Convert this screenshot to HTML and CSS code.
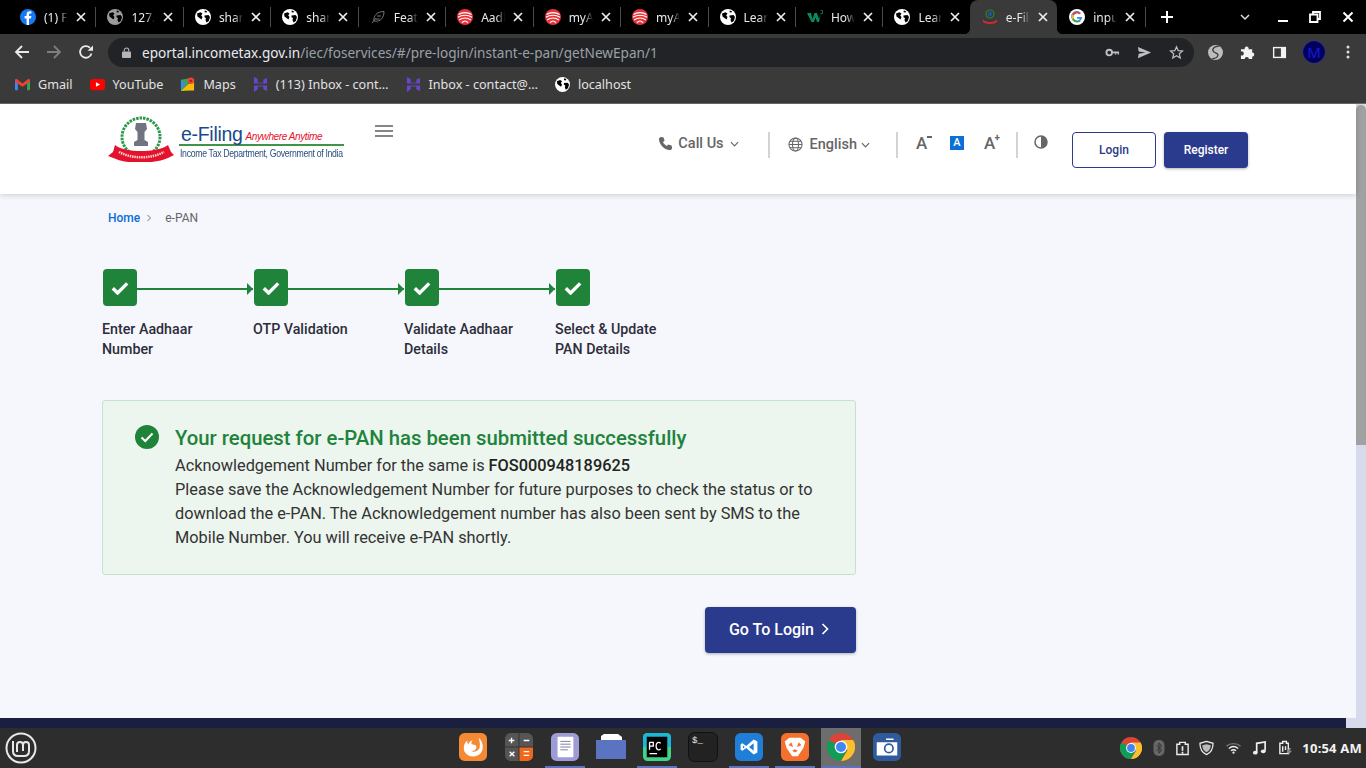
FILE: index.html
```html
<!DOCTYPE html>
<html lang="en">
<head>
<meta charset="utf-8">
<title>e-Filing</title>
<link rel="stylesheet" href="styles.css">
</head>
<body>
<svg class="defs" width="0" height="0">
  <defs>
    <symbol id="globe" viewBox="0 0 16 16">
      <circle cx="8" cy="8" r="8" fill="currentColor"/>
      <path d="M2 4.500 5.500 3.200 7.500 4.500 6.200 6.500 7.500 8 6.500 10.500 4.500 9 2.500 7.500ZM9.500 6.500 13.500 6 15 8 13.800 12 11.500 13.500 10.500 11 11 9 9.500 8.200ZM9.800 1.400 12 2.200 11.500 3.600 9.500 3.200Z" fill="#000"/>
    </symbol>
    <symbol id="aadhaar" viewBox="0 0 16 16">
      <circle cx="8" cy="8" r="8" fill="#e8333b"/>
      <path d="M1.500 5.500C5 3 11 3 14.500 5.500M1 8.200C5 5.600 11 5.600 15 8.200M2.200 11C5.500 8.400 10.500 8.400 13.800 11M5 14C6.500 11.400 9.500 11.400 11 14" fill="none" stroke="#fff" stroke-width="1.100"/>
    </symbol>
    <symbol id="close" viewBox="0 0 10 10">
      <path d="M1 1 9 9M9 1 1 9" stroke="currentColor" stroke-width="1.700" fill="none"/>
    </symbol>
    <symbol id="hostinger" viewBox="0 0 16 16">
      <path d="M1 0 5 2V6L11 6V3L15 1V7H1ZM1 9H15V15L11 13V10H5V13L1 16Z" fill="#6747c7"/>
    </symbol>
    <symbol id="chrome" viewBox="0 0 24 24">
      <circle cx="12" cy="12" r="12" fill="#db4437"/>
      <path d="M12 12 1.600 6A12 12 0 0 0 12 24L17.800 13.500Z" fill="#0f9d58"/>
      <path d="M12 6H22.400A12 12 0 0 1 12 24L17.500 15Z" fill="#fbc02d"/>
      <circle cx="12" cy="12" r="5.400" fill="#fff"/>
      <circle cx="12" cy="12" r="4.300" fill="#4285f4"/>
    </symbol>
    <symbol id="check" viewBox="0 0 18 14">
      <path d="M1.800 7.200 6.600 12 16.200 2.400" fill="none" stroke="currentColor" stroke-width="3.400"/>
    </symbol>
  </defs>
</svg>

<div class="chrome">
  <div class="tabstrip">
    <div class="tab"><svg class="fav" viewBox="0 0 16 16"><circle cx="8" cy="8" r="8" fill="#1877f2"/><path d="M9 16V9.400H11L11.400 7H9V5.600C9 4.800 9.400 4.400 10.200 4.400H11.400V2.400C10.800 2.300 10.200 2.200 9.700 2.200 7.800 2.200 6.600 3.400 6.600 5.300V7H4.600V9.400H6.600V16Z" fill="#fff"/></svg><span class="tab-title">(1) Facebook</span><svg class="tab-x"><use href="#close"/></svg></div>
    <div class="tab"><svg class="fav dim"><use href="#globe"/></svg><span class="tab-title">127.0.0.1</span><svg class="tab-x"><use href="#close"/></svg></div>
    <div class="tab"><svg class="fav"><use href="#globe"/></svg><span class="tab-title">share</span><svg class="tab-x"><use href="#close"/></svg></div>
    <div class="tab"><svg class="fav"><use href="#globe"/></svg><span class="tab-title">share</span><svg class="tab-x"><use href="#close"/></svg></div>
    <div class="tab"><svg class="fav" viewBox="0 0 16 16"><path d="M2 14 6 9M4 12C3 7 7 2.500 14 2.500 14 9 10 13 5 12ZM7 7H11M6 10H9.500" fill="none" stroke="#777" stroke-width="1"/></svg><span class="tab-title">Feature</span><svg class="tab-x"><use href="#close"/></svg></div>
    <div class="tab"><svg class="fav"><use href="#aadhaar"/></svg><span class="tab-title">Aadhaar</span><svg class="tab-x"><use href="#close"/></svg></div>
    <div class="tab"><svg class="fav"><use href="#aadhaar"/></svg><span class="tab-title">myAadhaar</span><svg class="tab-x"><use href="#close"/></svg></div>
    <div class="tab"><svg class="fav"><use href="#aadhaar"/></svg><span class="tab-title">myAadhaar</span><svg class="tab-x"><use href="#close"/></svg></div>
    <div class="tab"><svg class="fav"><use href="#globe"/></svg><span class="tab-title">Learn</span><svg class="tab-x"><use href="#close"/></svg></div>
    <div class="tab"><svg class="fav" viewBox="0 0 16 16"><path d="M0 4H4L5.500 10 7.500 4H10L12 10 14 4 12 13H10L8.500 8.500 7 13H4.500Z" fill="#0b8a5b"/><path d="M13.500 1.500H15.500V4.500H13.500" fill="none" stroke="#0b8a5b" stroke-width=".8"/></svg><span class="tab-title">How to</span><svg class="tab-x"><use href="#close"/></svg></div>
    <div class="tab tab-plain"><svg class="fav"><use href="#globe"/></svg><span class="tab-title">Learn</span><svg class="tab-x"><use href="#close"/></svg></div>
    <div class="tab tab-active"><svg class="fav" viewBox="0 0 16 16"><circle cx="8" cy="5" r="4" fill="none" stroke="#1f8a3b" stroke-width="1.200"/><circle cx="8" cy="5" r="2.200" fill="#2b4f8f"/><path d="M1 10.500C4 14 12 14 15 10.500V13C12 15.500 4 15.500 1 13Z" fill="#e02832"/></svg><span class="tab-title">e-Filing</span><svg class="tab-x"><use href="#close"/></svg></div>
    <div class="tab"><svg class="fav" viewBox="0 0 16 16"><circle cx="8" cy="8" r="8" fill="#fff"/><path d="M12.800 8.100H8.100V9.800H10.800C10.500 11 9.400 11.700 8.100 11.700A3.700 3.700 0 1 1 10.500 5.200L11.800 3.900A5.500 5.500 0 1 0 13 8.900Z" fill="#4285f4"/><path d="M3.200 5.300 4.700 6.400A3.700 3.700 0 0 1 10.500 5.200L11.800 3.900A5.500 5.500 0 0 0 3.200 5.300Z" fill="#ea4335"/><path d="M3.200 5.300A5.500 5.500 0 0 0 3.200 10.800L4.700 9.600A3.700 3.700 0 0 1 4.700 6.400Z" fill="#fbbc05"/><path d="M3.200 10.800A5.500 5.500 0 0 0 11.800 12L10.400 10.800A3.700 3.700 0 0 1 4.700 9.600Z" fill="#34a853"/></svg><span class="tab-title">input</span><svg class="tab-x"><use href="#close"/></svg></div>
    <svg class="newtab" viewBox="0 0 12 12"><path d="M6 0V12M0 6H12" stroke="#fff" stroke-width="2"/></svg>
    <div class="win-controls">
      <svg class="win-ic win-down" viewBox="0 0 12 12"><path d="M2 4 6 8 10 4" fill="none" stroke="#ddd" stroke-width="1.500"/></svg>
      <svg class="win-ic" viewBox="0 0 12 12"><path d="M1 10H11" stroke="#fff" stroke-width="2"/></svg>
      <svg class="win-ic win-restore" viewBox="0 0 12 12"><path d="M4 3V1H11V8H9M1 3.500H8.500V11H1Z" fill="none" stroke="#fff" stroke-width="1.800"/></svg>
      <svg class="win-ic" viewBox="0 0 12 12"><path d="M1.500 1.500 10.500 10.500M10.500 1.500 1.500 10.500" stroke="#fff" stroke-width="2"/></svg>
    </div>
  </div>
  <div class="toolbar">
    <svg class="nav-ic" viewBox="0 0 16 16"><path d="M15 8H2M8 2 2 8 8 14" fill="none" stroke="#e8eaed" stroke-width="1.800"/></svg>
    <svg class="nav-ic" viewBox="0 0 16 16"><path d="M1 8H14M8 2 14 8 8 14" fill="none" stroke="#7c7e82" stroke-width="1.800"/></svg>
    <svg class="nav-ic" viewBox="0 0 16 16"><path d="M13.500 9.500A5.800 5.800 0 1 1 12 3.800" fill="none" stroke="#e8eaed" stroke-width="1.800"/><path d="M9.500 6.800H15V1.500Z" fill="#e8eaed"/></svg>
    <div class="omnibox">
      <svg class="lock" viewBox="0 0 10 12"><path d="M2.500 5V3.500A2.500 2.500 0 0 1 7.500 3.500V5" fill="none" stroke="#b3b5b8" stroke-width="1.200"/><rect y="5" width="10" height="7" rx="1" fill="#b3b5b8"/></svg>
      <span class="url"><span class="url-host">eportal.incometax.gov.in</span>/iec/foservices/#/pre-login/instant-e-pan/getNewEpan/1</span>
      <svg class="omni-ic" viewBox="0 0 16 16"><circle cx="4.500" cy="8" r="3" fill="none" stroke="#bdbfc2" stroke-width="2"/><path d="M7.500 7H15V10H13.500V8.800H12V10H10.500V8.800H7.500Z" fill="#bdbfc2"/></svg>
      <svg class="omni-ic" viewBox="0 0 16 16"><path d="M1 2 15 8 1 14 1.800 9.200 9 8 1.800 6.800Z" fill="#bdbfc2"/></svg>
      <svg class="omni-ic" viewBox="0 0 16 16"><path d="M8 1.800 9.800 6 14.400 6.400 11 9.400 12 13.900 8 11.500 4 13.900 5 9.400 1.600 6.400 6.200 6Z" fill="none" stroke="#bdbfc2" stroke-width="1.300"/></svg>
    </div>
    <div class="ext">
      <svg class="ext-ic" viewBox="0 0 16 16"><circle cx="8" cy="8" r="8" fill="#bdbdbd"/><path d="M11.500 1.500C7.500 1 4.500 3.500 5.200 6 6 8.800 10.800 8 10.600 10.600 10.400 13 7.500 14.500 4.500 14.500" fill="none" stroke="#3a3a3a" stroke-width="1.500"/></svg>
      <svg class="ext-ic" viewBox="0 0 16 16"><path d="M1 4.500H5A2.200 2.200 0 1 1 9.200 4.500H13V8A2.200 2.200 0 1 1 13 12.500V15H9.500A2.200 2.200 0 1 0 5 15H1V11A2.200 2.200 0 1 0 1 7Z" fill="#f1f3f4"/></svg>
      <svg class="ext-ic" viewBox="0 0 16 16"><path d="M1 2H15V14H1Z" fill="#f1f3f4"/><path d="M2.500 3.500H9.500V12.500H2.500Z" fill="#3a3a3a"/></svg>
      <span class="avatar">M</span>
      <svg class="kebab" viewBox="0 0 4 14"><circle cx="2" cy="2" r="1.500" fill="#ddd"/><circle cx="2" cy="7" r="1.500" fill="#ddd"/><circle cx="2" cy="12" r="1.500" fill="#ddd"/></svg>
    </div>
  </div>
  <div class="bookmarks">
    <div class="bm"><svg class="bm-ic" viewBox="0 0 16 16"><path d="M0 3H3V14H1A1 1 0 0 1 0 13Z" fill="#4285f4"/><path d="M13 3H16V13A1 1 0 0 1 15 14H13Z" fill="#34a853"/><path d="M0 3 1.500 1.800 8 7 14.500 1.800 16 3V5L8 10.500 0 5Z" fill="#ea4335"/></svg>Gmail</div>
    <div class="bm"><svg class="bm-ic" viewBox="0 0 16 12"><rect width="16" height="12" rx="3" fill="#f00"/><path d="M6.300 3.500 10.800 6 6.300 8.500Z" fill="#fff"/></svg>YouTube</div>
    <div class="bm"><svg class="bm-ic" viewBox="0 0 16 16"><path d="M1 3 9 1.500V14.500L1 15Z" fill="#34a853"/><path d="M1 15 15 2V14.500H6Z" fill="#fbbc05"/><path d="M1 3 6 8 1 13Z" fill="#4285f4"/><circle cx="11.500" cy="4" r="3.500" fill="#ea4335"/><circle cx="11.500" cy="4" r="1.200" fill="#8c1f18"/></svg>Maps</div>
    <div class="bm"><svg class="bm-ic"><use href="#hostinger"/></svg>(113) Inbox - cont…</div>
    <div class="bm"><svg class="bm-ic"><use href="#hostinger"/></svg>Inbox - contact@…</div>
    <div class="bm"><svg class="bm-ic wh"><use href="#globe"/></svg>localhost</div>
  </div>
</div>

<div class="viewport">
  <div class="page">
    <header class="site-header">
      <a class="logo">
        <svg class="emblem" viewBox="0 0 66 46">
          <circle cx="33" cy="21" r="19" fill="#fff" stroke="#2d9a4e" stroke-width="3" stroke-dasharray="2.500 1"/>
          <path d="M28 7H38L39 13 36.500 16V24L40 26V30H26V26L29.500 24V16L27 13Z" fill="#6f7480"/>
          <path d="M7 29C17 37 49 37 60 29L63 36 66 39 60 42C48 48 18 48 8 43L0 40 5 36Z" fill="#e3122d"/>
          <path d="M11 36C24 43 43 43 56 36" fill="none" stroke="#ffd0d0" stroke-width="2.500" stroke-dasharray="1.500 .8"/>
        </svg>
        <div class="logo-text">
          <div class="logo-top"><span class="logo-name">e-Filing</span><span class="logo-tag">Anywhere Anytime</span></div>
          <div class="logo-sub">Income Tax Department, Government of India</div>
        </div>
      </a>
      <svg class="burger" viewBox="0 0 18 12"><path d="M0 1H18M0 6H18M0 11H18" stroke="#5f5f5f" stroke-width="1.700"/></svg>
      <div class="head-right">
        <div class="head-item callus">
          <svg class="h-ic" viewBox="0 0 16 16"><path d="M3.500 1 6 1.500 7 5 5.300 6.500C6 8.300 7.700 10 9.500 10.700L11 9 14.500 10 15 12.500C15 14 14 15 12.500 15 6.500 14.500 1.500 9.500 1 3.500 1 2 2 1 3.500 1Z" fill="#666"/></svg>
          <span>Call Us</span>
          <svg class="chev" viewBox="0 0 10 6"><path d="M1 1 5 5 9 1" fill="none" stroke="#666" stroke-width="1.300"/></svg>
        </div>
        <i class="vsep"></i>
        <div class="head-item lang">
          <svg class="h-ic" viewBox="0 0 16 16"><g fill="none" stroke="#666" stroke-width="1.100"><circle cx="8" cy="8" r="7"/><ellipse cx="8" cy="8" rx="3.200" ry="7"/><path d="M1 8H15M2 4.500H14M2 11.500H14"/></g></svg>
          <span>English</span>
          <svg class="chev" viewBox="0 0 10 6"><path d="M1 1 5 5 9 1" fill="none" stroke="#666" stroke-width="1.300"/></svg>
        </div>
        <i class="vsep"></i>
        <div class="fontctl">
          <span class="a-size">A<b class="a-mark"></b></span>
          <span class="a-box">A</span>
          <span class="a-size">A<b class="a-plus">+</b></span>
        </div>
        <i class="vsep"></i>
        <svg class="contrast" viewBox="0 0 14 14"><circle cx="7" cy="7" r="6" fill="#fff" stroke="#666" stroke-width="1.500"/><path d="M7 1A6 6 0 0 1 7 13Z" fill="#666"/></svg>
        <button class="btn btn-outline">Login</button>
        <button class="btn btn-solid">Register</button>
      </div>
    </header>

    <main class="content">
      <nav class="crumbs"><a class="crumb-link">Home</a><svg class="crumb-sep" viewBox="0 0 6 8"><path d="M1.500 1 4.500 4 1.500 7" fill="none" stroke="#777" stroke-width="1"/></svg><span>e-PAN</span></nav>

      <ol class="steps">
        <li class="step">
          <div class="step-head"><span class="step-box"><svg class="step-check"><use href="#check"/></svg></span><span class="step-line"></span></div>
          <div class="step-label">Enter Aadhaar Number</div>
        </li>
        <li class="step">
          <div class="step-head"><span class="step-box"><svg class="step-check"><use href="#check"/></svg></span><span class="step-line"></span></div>
          <div class="step-label">OTP Validation</div>
        </li>
        <li class="step">
          <div class="step-head"><span class="step-box"><svg class="step-check"><use href="#check"/></svg></span><span class="step-line"></span></div>
          <div class="step-label">Validate Aadhaar Details</div>
        </li>
        <li class="step step-end">
          <div class="step-head"><span class="step-box"><svg class="step-check"><use href="#check"/></svg></span></div>
          <div class="step-label">Select &amp; Update PAN Details</div>
        </li>
      </ol>

      <section class="alert">
        <svg class="alert-ic" viewBox="0 0 24 24"><circle cx="12" cy="12" r="12" fill="#20833a"/><path d="M6.500 12.500 10.300 16 17.500 8.500" fill="none" stroke="#fff" stroke-width="2"/></svg>
        <div class="alert-body">
          <h2 class="alert-title">Your request for e-PAN has been submitted successfully</h2>
          <p class="alert-text">Acknowledgement Number for the same is <b>FOS000948189625</b><br>Please save the Acknowledgement Number for future purposes to check the status or to download the e-PAN. The Acknowledgement number has also been sent by SMS to the Mobile Number. You will receive e-PAN shortly.</p>
        </div>
      </section>

      <div class="actions"><button class="btn-go">Go To Login<svg class="go-chev" viewBox="0 0 8 12"><path d="M1.500 1 6.500 6 1.500 11" fill="none" stroke="#fff" stroke-width="1.700"/></svg></button></div>
    </main>
    <footer class="site-foot"><span class="corner"></span></footer>
  </div>
  <div class="scrollbar"><span class="thumb"></span></div>
</div>

<div class="taskbar">
  <svg class="mint" viewBox="0 0 32 32"><circle cx="16" cy="16" r="14.500" fill="none" stroke="#e8e8e8" stroke-width="2"/><path d="M8 9V19C8 22 10 24 13 24H19C22 24 24 22 24 19V13C24 11 22.500 10 21 10 19.500 10 18 11 18 13V19M18 13C18 11 16.500 10 15 10 13.500 10 12 11 12 13V20" fill="none" stroke="#e8e8e8" stroke-width="2"/></svg>
  <div class="dock">
    <span class="dock-item"><svg class="app" viewBox="0 0 30 30"><rect width="30" height="30" rx="6" fill="#f58a35"/><path d="M21 5C26 9 27 17 23 22 18 27 9 26 6 20 4 15 6 10 9 8 8.500 10 9 11 10 12 11 9 13 8 15 8 13 9 13 11 14 12L18 13C20 16 17 20 13 19 15 21 20 20 22 16 23 12 22 8 21 5Z" fill="#fff"/></svg></span>
    <span class="dock-item"><svg class="app" viewBox="0 0 30 30"><rect width="30" height="30" rx="6" fill="#555"/><path d="M15 15H30V24A6 6 0 0 1 24 30H15Z" fill="#f0661a"/><path d="M7 5V11M4 8H10M20 8H26M5 20 10 25M10 20 5 25M20 20H26M20 24H26" stroke="#fff" stroke-width="1.500"/><path d="M15 0V30M0 15H30" stroke="#333" stroke-width="1"/></svg></span>
    <span class="dock-item active"><svg class="app" viewBox="0 0 30 30"><rect width="30" height="30" rx="6" fill="#9d9cd6"/><rect x="7" y="4" width="17" height="22" rx="1" fill="#fff"/><path d="M10 9H21M10 12H21M10 15H21M10 18H18" stroke="#77779f" stroke-width="1"/></svg></span>
    <span class="dock-item"><svg class="app app-wide" viewBox="0 0 30 30"><path d="M5 4 8 2H22L26 5V8H5Z" fill="#fff"/><path d="M0 8H30V27H0Z" fill="#5a74c2"/></svg></span>
    <span class="dock-item active"><svg class="app" viewBox="0 0 30 30"><rect width="30" height="30" rx="5" fill="#3fd68a"/><path d="M0 5A5 5 0 0 1 5 0H25A5 5 0 0 1 30 5V15H0Z" fill="#1ab8d6"/><rect x="4" y="4" width="22" height="22" fill="#000"/><path d="M7 10V18M7 10H11V14H7M19 11C17 9 14 10 14 14 14 18 17 19 19 17M7 22H15" fill="none" stroke="#fff" stroke-width="1.400"/></svg></span>
    <span class="dock-item"><svg class="app app-wide" viewBox="0 0 30 30"><rect x=".5" y=".5" width="29" height="29" rx="6" fill="#222" stroke="#111"/><text class="term-text" x="4" y="11">$_</text></svg></span>
    <span class="dock-item active"><svg class="app" viewBox="0 0 30 30"><rect width="30" height="30" rx="6" fill="#1f7fd6"/><path d="M20 7 12 14 8 11 6 12V18L8 19 12 16 20 23 24 21V9ZM20 11V19L15 15ZM8.500 13.300 10.500 15 8.500 16.700Z" fill="#fff" fill-rule="evenodd"/></svg></span>
    <span class="dock-item active"><svg class="app" viewBox="0 0 30 30"><rect width="30" height="30" rx="6" fill="#f5702f"/><path d="M9 5H21L26 9 24 16 18 25H12L6 16 4 9ZM8 13 13 15 11 10ZM22 13 17 15 19 10ZM12 19 15 21 18 19 15 17.500Z" fill="#fff" fill-rule="evenodd"/></svg></span>
    <span class="dock-item active current"><svg class="app"><use href="#chrome"/></svg></span>
    <span class="dock-item"><svg class="app" viewBox="0 0 30 30"><rect width="30" height="30" rx="6" fill="#2f5a9c"/><path d="M4 10H26V24H4ZM14 6H22V7.500H14Z" fill="#fff"/><circle cx="17" cy="16.500" r="4.500" fill="#fff" stroke="#2f5a9c" stroke-width="1.800"/></svg></span>
  </div>
  <div class="tray">
    <svg class="tray-chrome"><use href="#chrome"/></svg>
    <svg class="tray-ic tray-bt" viewBox="0 0 12 16"><rect width="11" height="16" rx="5" fill="#666"/><path d="M3 5 8 10 5.500 13V3L8 6 3 11" fill="none" stroke="#333" stroke-width="1"/></svg>
    <svg class="tray-ic tray-clip" viewBox="0 0 16 16"><path d="M5 2H11V4H14V15H2V4H5Z" fill="none" stroke="#eee" stroke-width="1.500"/><path d="M8 6V11M8 12V14" stroke="#eee" stroke-width="1.800"/></svg>
    <svg class="tray-ic tray-shield" viewBox="0 0 16 16"><path d="M8 1 15 3C15 9 13 13 8 15 3 13 1 9 1 3Z" fill="none" stroke="#eee" stroke-width="1.300"/><path d="M8 4 12.500 5C12.500 8.500 11 11 8 12.500 5 11 3.500 8.500 3.500 5Z" fill="#bbb"/></svg>
    <svg class="tray-ic" viewBox="0 0 16 12"><path d="M.5 4C4.500.500 11.500.500 15.500 4" fill="none" stroke="#777" stroke-width="1.500"/><path d="M3 6.500C6 4 10 4 13 6.500M5.300 9C7 7.600 9 7.600 10.700 9" fill="none" stroke="#eee" stroke-width="1.500"/><circle cx="8" cy="11" r="1.200" fill="#eee"/></svg>
    <svg class="tray-ic" viewBox="0 0 16 16"><path d="M5 13V3L14 1.500V11" fill="none" stroke="#eee" stroke-width="1.800"/><ellipse cx="3.500" cy="13" rx="2.500" ry="2" fill="#eee"/><ellipse cx="12" cy="11.500" rx="2.500" ry="2" fill="#eee"/></svg>
    <svg class="tray-ic tray-batt" viewBox="0 0 16 16"><path d="M5 1H9V3H11V14H2V3H5Z" fill="none" stroke="#eee" stroke-width="1.500"/><path d="M5 6V12M8 6V10" stroke="#eee" stroke-width="1.500"/><path d="M12 8 9 13H11.500L10.500 16 15 11H12.500L14 8Z" fill="#888"/></svg>
    <span class="clock">10:54 AM</span>
  </div>
</div>
</body>
</html>
```

FILE: styles.css
```css
* { box-sizing: border-box; }
html, body { margin: 0; height: 100%; }
body {
  width: 1366px;
  height: 768px;
  overflow: hidden;
  display: flex;
  flex-direction: column;
  font-family: Roboto, "Liberation Sans", sans-serif;
  background: #2d2d2d;
}
.defs { display: block; height: 0; }

/* browser chrome */
.chrome { flex: none; font-family: "Noto Sans", "Open Sans", sans-serif; }
.tabstrip {
  height: 34px;
  background: #000;
  display: flex;
  align-items: center;
  padding-left: 8px;
  color: #e8eaed;
}
.tab {
  width: 87.45px;
  height: 34px;
  flex: none;
  display: flex;
  align-items: center;
  padding-left: 12px;
  position: relative;
  font-size: 12px;
}
.tab::after {
  content: "";
  position: absolute;
  right: -1px;
  top: 7px;
  height: 20px;
  width: 1px;
  background: #4a4a4a;
}
.tab-plain::after { display: none; }
.tab-active {
  background: #3a3a3a;
  border-radius: 8px 8px 0 0;
}
.tab-active::before,
.tab-active::after {
  content: "";
  position: absolute;
  top: auto;
  bottom: 0;
  width: 6px;
  height: 6px;
  background: radial-gradient(circle at 0 0, transparent 6px, #3a3a3a 6.500px);
}
.tab-active::before {
  left: -6px;
  right: auto;
}
.tab-active::after {
  right: -6px;
  background: radial-gradient(circle at 100% 0, transparent 6px, #3a3a3a 6.500px);
}
.fav { width: 16px; height: 16px; flex: none; color: #fff; }
.fav.dim { color: #9b9b9b; }
.tab-title {
  margin-left: 8px;
  width: 25px;
  flex: none;
  overflow: hidden;
  white-space: nowrap;
  mask-image: linear-gradient(to right, #000 60%, transparent 96%);
}
.tab-x { width: 10px; height: 10px; margin-left: 7px; flex: none; color: #eee; }
.newtab { width: 12px; height: 12px; margin-left: 16px; flex: none; }
.win-controls {
  margin-left: auto;
  display: flex;
  gap: 20px;
  padding-right: 12px;
}
.win-ic { width: 12px; height: 12px; display: block; }
.win-down { margin-right: 6px; }
.win-restore { margin-right: 1px; }

.toolbar {
  height: 36px;
  background: #3a3a3a;
  display: flex;
  align-items: center;
  padding-left: 14px;
}
.nav-ic { width: 16px; height: 16px; margin-right: 16px; flex: none; }
.nav-ic:nth-child(3) { margin-right: 14px; }
.omnibox {
  width: 1086px;
  height: 29px;
  background: #222327;
  border-radius: 15px;
  display: flex;
  align-items: center;
  padding: 0 10px 0 14px;
}
.lock { width: 9px; height: 11px; flex: none; }
.url {
  margin-left: 11px;
  flex: 1;
  font-size: 13.6px;
  color: #9aa0a6;
  white-space: nowrap;
}
.url-host { color: #e8eaed; }
.omni-ic { width: 15px; height: 15px; flex: none; margin-left: 17px; }
.ext { display: flex; align-items: center; margin-left: 14px; }
.ext-ic { width: 15px; height: 15px; margin-right: 17px; flex: none; }
.avatar {
  width: 22px;
  height: 22px;
  border-radius: 50%;
  background: #00005c;
  border: 1px solid #000099;
  color: #1a1ad0;
  font-size: 15px;
  line-height: 20px;
  text-align: center;
  margin-left: -1px;
}
.kebab { width: 4px; height: 14px; margin-left: 21px; }

.bookmarks {
  height: 34px;
  background: #3a3a3a;
  display: flex;
  align-items: center;
  padding: 0 0 4px 15px;
  font-size: 12.6px;
  color: #e3e3e3;
  border-bottom: 1px solid #6a6a6a;
  gap: 17px;
}
.bm { display: flex; align-items: center; white-space: nowrap; }
.bm-ic { width: 15px; height: 15px; margin-right: 8px; flex: none; }
.bm-ic.wh { color: #fff; }

/* viewport */
.viewport { flex: 1; min-height: 0; display: flex; }
.page {
  flex: 1;
  min-width: 0;
  background: #f5f7fc;
  display: flex;
  flex-direction: column;
}
.scrollbar { width: 10px; flex: none; background: #d7daea; padding-top: 1px; }
.thumb { display: block; height: 340px; background: #a1a1a1; border-radius: 5px 5px 0 0; }

.site-header {
  height: 90px;
  flex: none;
  background: #fff;
  box-shadow: 0 1px 6px rgba(0, 0, 0, .18);
  display: flex;
  padding: 12px 108px 0 108px;
  position: relative;
}
.logo { display: flex; align-items: flex-start; width: 236px; flex: none; }
.emblem { width: 66px; height: 46px; flex: none; }
.logo-text { margin-left: 5px; padding-top: 10px; font-family: "Liberation Sans", Arial, sans-serif; width: 165px; }
.logo-top { height: 20px; display: flex; align-items: flex-end; border-bottom: 2px solid #3e9447; line-height: 1; white-space: nowrap; }
.logo-name { font-size: 19.5px; color: #174a8b; letter-spacing: -.3px; margin-left: 2px; }
.logo-tag { font-size: 10px; font-style: italic; color: #e2132c; margin-left: 3px; letter-spacing: -.4px; padding-bottom: 2px; }
.logo-sub {
  font-size: 10px;
  color: #2b4f80;
  white-space: nowrap;
  letter-spacing: -.36px;
  margin-top: 2px;
  margin-left: 1px;
  transform: scaleX(.87);
  transform-origin: left center;
}
.burger { width: 18px; height: 12px; flex: none; margin: 9px 0 0 31px; }
.head-right {
  display: flex;
  align-items: flex-start;
  margin-left: auto;
  padding-top: 19px;
  color: #666;
  font-size: 14px;
}
.head-item { display: flex; align-items: center; font-weight: 500; font-size: 14.5px; color: #666; }
.h-ic { width: 15px; height: 15px; flex: none; }
.chev { width: 9px; height: 6px; flex: none; }
.callus span { margin-left: 5px; }
.callus .chev { margin-left: 6px; }
.lang { margin-top: 1px; }
.lang span { margin-left: 7px; }
.lang .chev { margin-left: 4px; }
.vsep { display: block; width: 2px; height: 26px; background: #d3d3d3; margin-top: -3px; }
.callus { margin-right: 29px; }
.callus + .vsep { margin-right: 18px; }
.lang { margin-right: 26px; }
.lang + .vsep { margin-right: 18px; }
.fontctl { display: flex; align-items: center; width: 100px; margin-top: -1px; }
.a-size { font-size: 17px; font-weight: 500; position: relative; width: 15px; line-height: 18px; }
.a-mark { position: absolute; right: -1px; top: 2px; width: 5px; height: 1.500px; background: #666; }
.a-plus { position: absolute; right: -1px; top: -2px; font-size: 10px; font-weight: 700; line-height: 12px; }
.a-box {
  width: 14px;
  height: 14px;
  background: #0b6fd6;
  color: #fff;
  font-size: 11px;
  font-weight: 500;
  line-height: 14px;
  text-align: center;
  margin: 0 20px 0 19px;
}
.fontctl + .vsep { margin-right: 16px; }
.contrast { width: 14px; height: 14px; flex: none; }
.btn {
  height: 36px;
  border-radius: 4px;
  font: 500 12px Roboto, sans-serif;
  margin-top: -3px;
  cursor: pointer;
}
.btn-outline { width: 84px; background: #fff; border: 1px solid #2a3a8c; color: #2a3a8c; margin-left: 24px; }
.btn-solid { width: 84px; background: #2a3a8c; border: 0; color: #fff; margin-left: 8px; box-shadow: 0 1px 3px rgba(0, 0, 0, .3); }

.content { flex: 1; min-height: 0; padding: 17px 0 0 102px; }
.crumbs {
  display: flex;
  align-items: center;
  font-size: 12px;
  color: #666;
  padding-left: 6px;
  height: 14px;
}
.crumb-link { color: #0b6fd6; font-weight: 500; }
.crumb-sep { width: 6px; height: 8px; margin: 0 13px 0 6px; }

.steps {
  list-style: none;
  margin: 44px 0 0;
  padding: 0;
  display: flex;
}
.step { width: 151px; }
.step-head { display: flex; align-items: center; height: 37px; padding-left: 1px; }
.step-box {
  width: 34px;
  height: 37px;
  flex: none;
  background: #20833a;
  border-radius: 4px;
  color: #fff;
  display: flex;
  align-items: center;
  justify-content: center;
}
.step-check { width: 18px; height: 14px; }
.step-line {
  flex: 1;
  height: 2px;
  margin-top: 2px;
  background: #20833a;
  position: relative;
}
.step-line::after {
  content: "";
  position: absolute;
  right: 0;
  top: -5px;
  border-left: 6px solid #20833a;
  border-top: 6px solid transparent;
  border-bottom: 6px solid transparent;
}
.step-label {
  font-size: 14.25px;
  font-weight: 500;
  line-height: 20px;
  color: #2d2d3a;
  margin-top: 13px;
  width: 118px;
}

.alert {
  width: 754px;
  height: 175px;
  margin-top: 41px;
  background: #ecf5ee;
  border: 1px solid #c3e3cc;
  border-radius: 3px;
  display: flex;
  padding: 22px 36px 0 32px;
}
.alert-ic { width: 24px; height: 24px; flex: none; margin-top: 2px; }
.alert-body { margin-left: 16px; }
.alert-title { margin: 0; font-size: 20.32px; line-height: 31px; font-weight: 500; color: #20833a; }
.alert-text { margin: 0; font-size: 16.32px; line-height: 24px; color: #333; }
.alert-text b { font-weight: 500; color: #222; }

.actions { width: 754px; display: flex; justify-content: flex-end; margin-top: 32px; }
.btn-go {
  width: 151px;
  height: 46px;
  background: #2a3a8c;
  color: #fff;
  border: 0;
  border-radius: 4px;
  padding: 0 3px 2px 0;
  font: 500 16px Roboto, sans-serif;
  display: flex;
  align-items: center;
  justify-content: center;
  box-shadow: 0 1px 3px rgba(0, 0, 0, .3);
}
.go-chev { width: 8px; height: 12px; margin-left: 7px; }

.site-foot {
  height: 10px;
  flex: none;
  background: #1a1f3f;
  display: flex;
  justify-content: flex-end;
}
.corner { width: 10px; background: #d7daea; }

/* desktop taskbar */
.taskbar {
  height: 40px;
  flex: none;
  background: #2d2d2d;
  display: flex;
  align-items: center;
  position: relative;
}
.mint { width: 32px; height: 32px; margin-left: 5px; flex: none; }
.dock { display: flex; position: absolute; left: 450px; top: 0; }
.dock-item {
  width: 46px;
  height: 40px;
  display: flex;
  align-items: center;
  justify-content: center;
  border-bottom: 2px solid transparent;
}
.dock-item.active { border-bottom-color: #5a74c2; width: 40px; margin: 0 3px; }
.dock-item.current { background: #6d6d6d; }
.app { width: 28px; height: 28px; flex: none; }
.app-wide { width: 30px; height: 30px; }
.term-text { font: 9px "Liberation Mono", monospace; fill: #eee; }
.tray { margin-left: auto; display: flex; align-items: center; padding-right: 4px; }
.tray-chrome { width: 22px; height: 22px; margin-right: 10px; }
.tray-ic { width: 15px; height: 16px; margin-right: 11px; flex: none; }
.tray-bt { margin-right: 8px; }
.tray-clip { margin-right: 9px; }
.tray-shield { margin-right: 12px; }
.tray-batt { margin-right: 8px; }
.clock { font: 700 13px "Noto Sans", sans-serif; color: #f2f2f2; letter-spacing: .2px; margin-left: 1px; }
```
